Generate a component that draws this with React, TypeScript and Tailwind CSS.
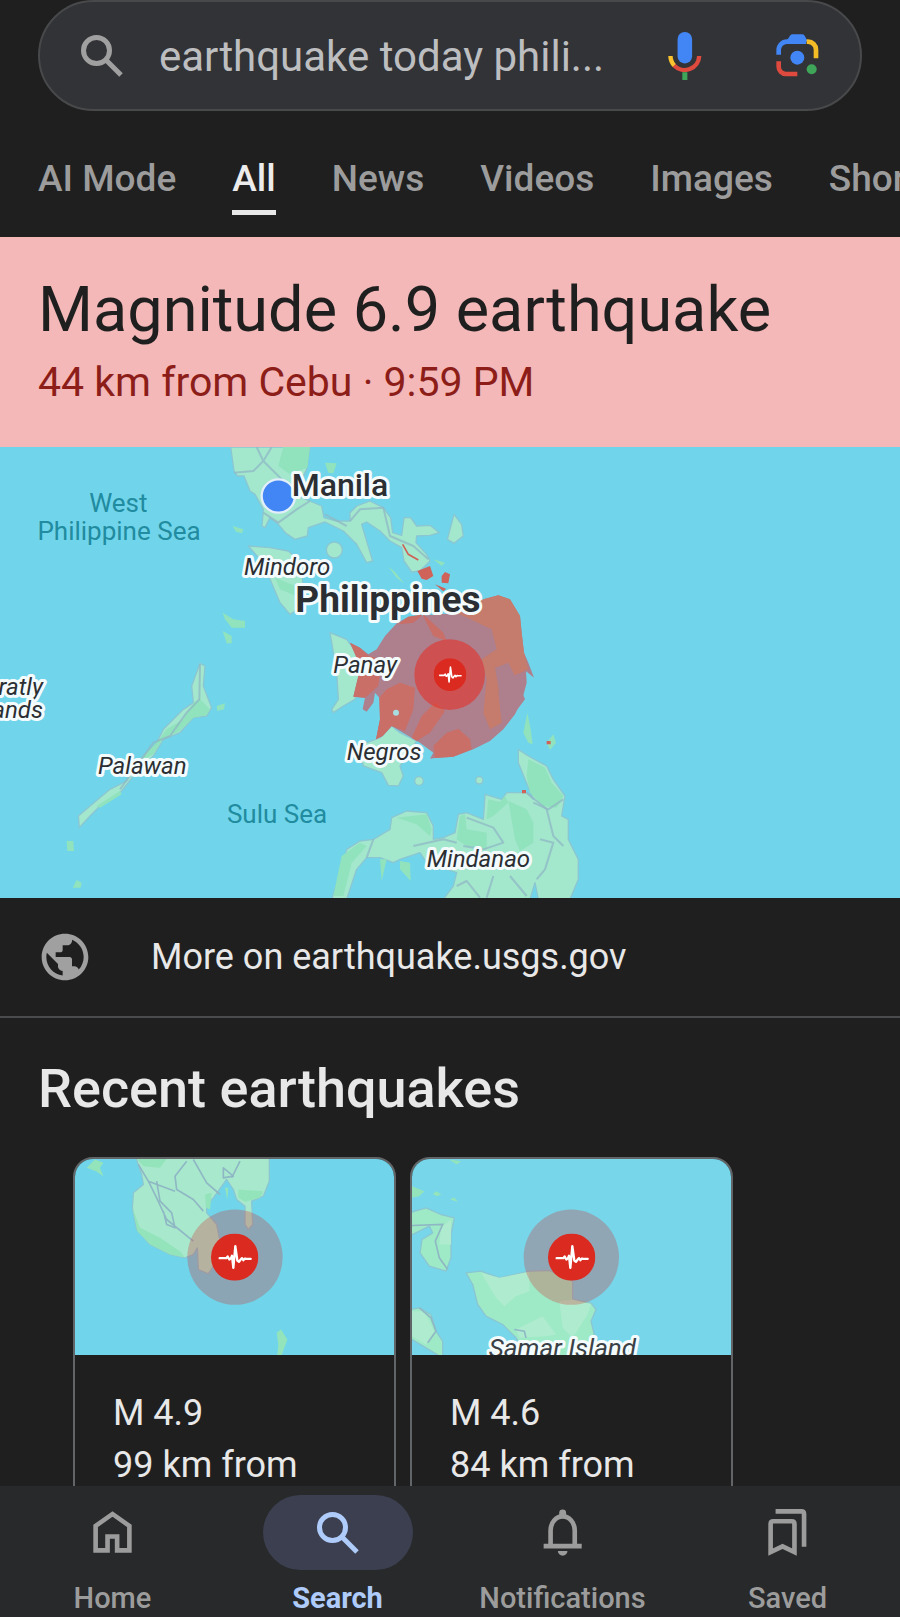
import type { ComponentType, SVGProps } from "react";
import { clsx } from "clsx";
import { MdPublic } from "react-icons/md";

type IconProps = SVGProps<SVGSVGElement>;

const SearchIcon = (props: IconProps) => (
  <svg viewBox="0 0 42 42" fill="none" stroke="currentColor" strokeWidth={5} aria-hidden {...props}>
    <circle cx="15.5" cy="15.5" r="13" />
    <path d="M24.5 24.5 40 40" />
  </svg>
);

const MicIcon = (props: IconProps) => (
  <svg viewBox="654 95 100 142" fill="none" aria-hidden {...props}>
    <rect x="682" y="95" width="43" height="93" rx="21" fill="#4285f4" />
    <path d="M661 166a42 42 0 0 0 12 29" stroke="#f9c22e" strokeWidth="13" />
    <path d="M672 194a43 43 0 0 0 74-28" stroke="#df4a3e" strokeWidth="13" />
    <path d="M703.500 214v23" stroke="#3fa558" strokeWidth="15" />
  </svg>
);

const LensIcon = (props: IconProps) => (
  <svg viewBox="977 101 129 129" fill="none" strokeWidth="14" aria-hidden {...props}>
    <path d="M985 163v-14a25 25 0 0 1 25-25h57" stroke="#4285f4" />
    <path d="M1010 120l9-14q3-4 8-4h28q5 0 8 4l10 18z" fill="#4285f4" />
    <path d="M1069 124h4a24 24 0 0 1 24 24v26" stroke="#f5bd25" />
    <path d="M985 183v16a22 22 0 0 0 22 22h34" stroke="#df4a3e" />
    <circle cx="1041" cy="172" r="21" fill="#4285f4" />
    <circle cx="1084" cy="207" r="15" fill="#3fa558" />
  </svg>
);

const HomeIcon = (props: IconProps) => (
  <svg viewBox="267 119 142 142" fill="none" stroke="currentColor" strokeWidth="14" aria-hidden {...props}>
    <path d="M287 244v-74l51-36 51 36v74h-37v-42h-29v42z" />
  </svg>
);

const BellIcon = (props: IconProps) => (
  <svg viewBox="266 119 142 142" fill="none" stroke="currentColor" strokeWidth="14" aria-hidden {...props}>
    <path d="M301 230v-46a36 42 0 0 1 73 0v46" />
    <path d="M280 231h115" />
    <path d="M327 143v-12a10.500 10.500 0 0 1 21 0v12zM323 246h29a14.500 14 0 0 1-29 0z" fill="currentColor" stroke="none" />
  </svg>
);

const SavedIcon = (props: IconProps) => (
  <svg viewBox="942 117 142 142" fill="none" stroke="currentColor" strokeWidth="14" aria-hidden {...props}>
    <path d="M962 247v-85q0-8 8-8h56q8 0 8 8v85l-36-17z" />
    <path d="M977 124h78q8 0 8 8v99" />
  </svg>
);

const PulseMarker = ({ x, y, size }: { x: number; y: number; size: number }) => (
  <svg x={x - size / 2} y={y - size / 2} width={size} height={size} viewBox="0 0 142 142">
    <circle cx="71" cy="71" r="71" fill="#db2a20" />
    <path
      d="M26 74h20l4-5 5 9 5-4 3-7 4 36 6-65 6 43 5 4 5-7 4-4 4 6 5-5 3 1h14"
      fill="none"
      stroke="#fff"
      strokeWidth="7"
      strokeLinejoin="round"
      strokeLinecap="round"
    />
  </svg>
);

const placeLabels = [
  { name: "Manila", x: 275, y: 149, className: "text-[96px] font-medium" },
  { name: "Mindoro", x: 132, y: 386, className: "text-[72px] italic" },
  { name: "Philippines", x: 286, y: 498, className: "text-[111px] font-bold" },
  { name: "Panay", x: 400, y: 681, className: "text-[72px] italic" },
  { name: "Negros", x: 440, y: 941, className: "text-[72px] italic" },
  { name: "Mindanao", x: 680, y: 1263, className: "text-[72px] italic" },
  { name: "Palawan", x: -306, y: 984, className: "text-[72px] italic" },
];

const seaLabels = [
  { name: "West", x: -245, y: 197 },
  { name: "Philippine Sea", x: -243, y: 282 },
  { name: "Sulu Sea", x: 231, y: 1131 },
];

const QuakeMap = () => (
  <svg
    viewBox="-600 3 2700 1353"
    preserveAspectRatio="xMidYMid slice"
    className="block h-[451px] w-full bg-[#70d5ea]"
    role="img"
    aria-label="Map of the Philippines"
  >
    <g fill="#a3e7cd" stroke="#8bc6d3" strokeWidth="4" strokeLinejoin="round">
      {/* Luzon and Bicol */}
      <path d="M92 3 330 3 320 70 300 110 290 150 330 165 365 180 372 215 410 225 450 225 450 200 470 180 510 165 550 185 572 215 578 260 605 268 612 215 632 215 650 240 690 238 718 260 690 268 650 270 648 290 680 325 690 345 660 375 635 378 612 345 605 305 570 285 540 255 500 228 485 235 500 285 518 345 500 350 470 295 430 255 375 228 325 245 322 270 285 280 258 262 235 235 210 215 195 245 186 240 190 190 165 145 150 135 132 90 112 90 102 75z" />
      <path d="M762 205 785 235 790 270 762 292 742 280z" />
      {/* Mindoro */}
      <path d="M145 300 210 305 265 315 300 345 310 420 295 490 270 505 240 470 210 400 180 340z" />
      <circle cx="403" cy="312" r="24" />
      {/* Panay, west coast */}
      <path d="M390 560 440 580 470 620 530 640 490 700 465 760 430 780 400 800 395 790 415 760 410 680z" />
      {/* Negros, south */}
      <path d="M575 840 600 860 650 885 620 930 600 960 610 990 595 1020 565 1018 545 980 490 960 475 900 540 875z" />
      {/* Palawan */}
      <path d="M0 652 15 660 10 720 35 785 20 810-20 815-60 860-110 880-140 930-200 990-235 1035-300 1080-330 1110-362 1145-365 1110-330 1080-270 1030-220 1005-190 950-130 890-110 850-80 820-50 790-20 770-25 720z" />
      {/* Mindanao */}
      <path d="M395 1360 425 1270 440 1210 480 1185 520 1180 570 1150 575 1115 620 1095 680 1100 700 1140 700 1180 730 1175 765 1160 775 1105 800 1100 850 1120 855 1045 905 1060 920 1040 980 1040 1000 1060 975 1000 955 950 955 910 985 930 1040 960 1060 1000 1095 1050 1085 1110 1105 1120 1105 1180 1135 1240 1135 1300 1110 1360 1015 1360 1005 1310 990 1360 730 1360 760 1320 770 1280 680 1250 660 1220 600 1240 580 1250 540 1235 500 1235 470 1270 440 1360z" />
      <circle cx="657" cy="1005" r="13" />
      <circle cx="838" cy="1003" r="11" />
    </g>
    <g fill="#90e3bc">
      <path d="M250 3 330 3 322 65 270 85 235 60z" />
      <path d="M375 50 410 52 400 82 385 80z" />
      <path d="M98 240 130 250 126 262 108 257z" />
      <path d="M225 395 300 425 290 450 240 430z" />
      <path d="M68 500 100 520 135 525 135 545 95 545 75 520z" />
      <path d="M68 555 95 570 95 592 80 592z" />
      <path d="M565 362 585 378 612 412 590 395z" />
      <path d="M700 340 735 350 725 360z" />
      <path d="M50 780 75 772 72 790 52 795z" />
      <path d="M-190 950-130 890-100 850-50 820-20 770 0 760 30 790 20 808-20 815-60 855-110 878-140 925z" />
      <path d="M-310 1080-240 1035-235 1045-300 1085z" />
      <path d="M-400 1185-380 1185-378 1215-398 1215zM-382 1325-370 1302-355 1310-358 1325z" />
      <path d="M425 1230 480 1190 500 1200 455 1250 430 1350 400 1350z" />
      <path d="M590 1115 680 1105 695 1150 690 1170 650 1135z" />
      <path d="M780 1110 795 1105 800 1150 860 1160 860 1210 800 1200 770 1180z" />
      <path d="M925 1065 980 1090 1000 1130 1000 1190 960 1215 945 1180z" />
      <path d="M985 940 1035 965 1055 1010 1090 1050 1070 1085 1030 1080 990 1040 980 990z" />
      <path d="M970 860 982 800 992 850 998 895 985 890z" />
      <path d="M1040 890 1060 865 1068 890 1050 912z" />
      <path d="M540 1240 560 1240 545 1305zM600 1245 630 1250 632 1305 600 1270z" />
      <path d="M865 1060 900 1068 915 1050 925 1070 880 1110 860 1120z" />
    </g>
    <g fill="none" stroke="#8fb8c4" strokeWidth="6" strokeOpacity={0.75} strokeLinejoin="round">
      <path d="M170 3 190 45 240 95 300 150M102 80 160 75 190 45 215 3M190 200 235 230 290 190 330 165" />
      <path d="M450 225 480 190 550 185 570 270 640 300 685 340M375 205 440 240" />
      <path d="M0 655-2 760-40 800-90 870-140 890-240 1030" />
      <path d="M520 1180 500 1235M640 1200 730 1180 770 1190M800 1115 880 1145 910 1190 850 1210 790 1200" />
      <path d="M980 1040 1040 1090 1060 1170 1090 1200M1020 1180 1060 1190 1035 1270 1010 1300M930 1290 980 1350M860 1355 880 1290" />
      <path d="M770 1320 800 1305 840 1355M1000 1070 1045 1090 1090 1060" />
    </g>

    {/* shaken area */}
    <path
      fill="#ae7f8c"
      d="M450 590 480 605 505 625 530 610 555 570 590 532 625 512 840 495 850 460 895 448 930 460 960 510 965 560 972 620 985 650 1002 695 978 676 980 710 968 755 945 805 910 850 870 885 820 910 760 932 705 936 690 938 700 920 660 890 600 855 575 840 548 870 528 880 540 820 538 755 525 740 520 770 500 797 488 790 495 755 460 752 475 690 470 635z"
    />
    <g fill="#c96f68">
      <path d="M450 590 480 605 505 630 545 640 535 720 495 755 460 752 475 690 470 635z" />
      <path d="M560 730 600 710 645 725 640 790 615 855 575 840 548 870 528 880 540 820 538 755z" />
      <path d="M705 770 735 795 690 860 650 885 635 875 665 810z" />
      <path d="M740 860 775 848 810 880 815 910 760 932 705 936 700 900z" />
      <path d="M595 535 625 512 670 505 640 530z" />
      <path d="M665 500 730 560 740 585 700 570z" />
    </g>
    <path
      fill="#c57c6c"
      d="M770 500 850 460 895 448 930 460 960 510 965 560 972 620 985 670 940 690 905 660 895 740 905 830 870 850 850 800 860 700 845 640 890 610 875 550z"
    />
    <path fill="#ae7f8c" d="M885 665 925 650 950 700 975 760 930 820 905 780z" />
    <circle cx="588" cy="800" r="9" fill="#a8dce0" />
    <path fill="#cf6259" d="M652 375 690 360 700 390 680 402 665 398zM725 390 735 378 750 385 745 412 725 410zM705 415 738 428 730 436zM1040 885h12v10h-12zM966 1032h12v10h-12z" />
    <path fill="none" stroke="#cf6259" strokeWidth="5" d="M608 295 625 325 655 342" />
    <circle cx="749" cy="686" r="106" fill="#e4342c" fillOpacity={0.62} />
    <PulseMarker x={750} y={686} size={98} />
    <circle cx="235" cy="150" r="50" fill="#4285f4" stroke="#e3eefb" strokeWidth="7" />

    <g className="fill-[#2b2f33] font-[Roboto,sans-serif]" stroke="#f4fbfd" strokeWidth="18" strokeLinejoin="round" paintOrder="stroke">
      {placeLabels.map(({ name, x, y, className }) => (
        <text key={name} x={x} y={y} className={className}>
          {name}
        </text>
      ))}
      <text x="-471" y="746" textAnchor="end" className="text-[72px] italic">
        ratly
      </text>
      <text x="-471" y="815" textAnchor="end" className="text-[72px] italic">
        ands
      </text>
    </g>
    <g className="fill-[#218ba0] font-[Roboto,sans-serif] text-[78px]" textAnchor="middle">
      {seaLabels.map(({ name, x, y }) => (
        <text key={name} x={x} y={y}>
          {name}
        </text>
      ))}
    </g>
  </svg>
);

const SouthCoastMap = () => (
  <svg viewBox="45 43 957 589" preserveAspectRatio="xMidYMid slice" className="block h-[196px] w-full bg-[#70d5ea]" aria-hidden>
    <g fill="#a8e8cd" stroke="#8bc6d3" strokeWidth="4" strokeLinejoin="round">
      <path d="M228 40 245 90 250 120 220 145 217 190 230 255 270 300 330 330 375 340 400 330 412 310 415 375 445 388 470 350 480 290 470 240 455 222 440 205 440 185 460 160 500 105 520 135 530 165 555 185 555 240 565 255 578 240 575 170 610 155 628 110 628 40z" />
    </g>
    <g fill="#93e4bb">
      <path d="M80 70 105 45 130 55 120 70 130 95 108 80z" />
      <path d="M230 43 320 43 300 70 250 65z" />
      <path d="M217 190 240 250 300 280 360 320 375 340 330 330 270 300 232 260z" />
      <path d="M435 150 455 145 450 195 438 190z" />
      <path d="M535 135 610 140 600 160 555 172 535 160zM495 130 505 130 502 165z" />
      <path d="M650 565 663 555 682 585 665 632 652 632 655 600z" />
    </g>
    <g fill="none" stroke="#8fb8c4" strokeWidth="5" strokeLinejoin="round">
      <path d="M380 50 345 95 350 135 400 165 430 200M400 45 440 115 480 150" />
      <path d="M235 60 265 110 345 140M265 110 290 160 320 225 400 290M290 110 300 170 335 205 345 250 320 240 310 200" />
      <path d="M490 70 520 95 490 100zM540 50 515 100" />
    </g>
    <circle cx="525" cy="338" r="143" fill="#d92b27" fillOpacity={0.28} />
    <PulseMarker x={524} y={338} size={142} />
  </svg>
);

const SamarMap = () => (
  <svg viewBox="38 43 957 589" preserveAspectRatio="xMidYMid slice" className="block h-[196px] w-full bg-[#77d6ea]" aria-hidden>
    <g fill="#9ee9c6" stroke="#8bc6d3" strokeWidth="4" strokeLinejoin="round">
      <path d="M200 385 245 380 300 400 390 380 450 378 520 410 520 465 575 475 590 495 575 530 585 570 560 640 390 640 350 580 310 540 260 515 235 480 220 420z" />
      <path d="M30 205 80 190 125 210 165 220 155 270 155 340 140 380 90 365 62 325 68 285 100 265 90 245 30 275z" />
      <path d="M30 495 60 490 95 510 110 560 130 590 130 640 80 610 30 580z" />
    </g>
    <g fill="#afeccf">
      <path d="M245 385 300 400 390 382 390 440 350 455 315 485 290 460z" />
      <path d="M520 465 575 480 565 510 520 580 490 550 480 470zM350 555 430 515 470 570 440 575 360 580z" />
      <path d="M125 250 155 225 155 300 120 300zM38 500 75 500 105 560 80 600 38 575z" />
    </g>
    <g fill="#93e4bb">
      <path d="M38 125 75 140 60 155 38 160zM100 148 112 140 126 150 112 155zM152 165 165 158 175 172zM150 45 185 50 172 60z" />
    </g>
    <g fill="none" stroke="#8fb8c4" strokeWidth="5">
      <path d="M38 243 130 240 108 290 120 340 145 375M60 490 95 520 110 560 85 595M345 555 375 560 380 580" />
    </g>
    <circle cx="516" cy="338" r="143" fill="#d92b27" fillOpacity={0.28} />
    <PulseMarker x={517} y={338} size={142} />
    <text
      x="268"
      y="638"
      className="fill-[#3a4146] font-[Roboto,sans-serif] text-[78px] italic"
      stroke="#f4fbfd"
      strokeWidth="18"
      strokeLinejoin="round"
      paintOrder="stroke"
    >
      Samar Island
    </text>
  </svg>
);

const tabs = ["AI Mode", "All", "News", "Videos", "Images", "Shorts"];

const quakes: { magnitude: string; distance: string; Map: ComponentType }[] = [
  { magnitude: "M 4.9", distance: "99 km from", Map: SouthCoastMap },
  { magnitude: "M 4.6", distance: "84 km from", Map: SamarMap },
];

const navItems: { label: string; Icon: ComponentType<IconProps> }[] = [
  { label: "Home", Icon: HomeIcon },
  { label: "Search", Icon: SearchIcon },
  { label: "Notifications", Icon: BellIcon },
  { label: "Saved", Icon: SavedIcon },
];

const SearchBar = () => (
  <form className="mx-[38px] flex h-[111px] items-center rounded-full border-2 border-[#48494b] bg-[#323336] px-[41px]">
    <SearchIcon className="size-[42px] shrink-0 text-[#a0a0a0]" />
    <input
      type="text"
      aria-label="Search"
      defaultValue="earthquake today phili..."
      className="ml-9 h-full min-w-0 flex-1 bg-transparent pt-0.5 text-[42px] text-[#bdbec0] outline-none"
    />
    <button type="button" aria-label="Search by voice" className="shrink-0">
      <MicIcon className="h-12 w-[34px]" />
    </button>
    <button type="button" aria-label="Search by image" className="ml-[74px] shrink-0">
      <LensIcon className="size-[43px]" />
    </button>
  </form>
);

const Tabs = () => (
  <nav className="flex h-[126px] gap-14 overflow-hidden px-[38px] pt-[42px]">
    {tabs.map((tab) => (
      <a
        key={tab}
        href="#"
        className={clsx(
          "h-[62px] shrink-0 border-b-[5px] text-[37px] leading-[52px] font-medium whitespace-nowrap",
          tab === "All" ? "border-[#e8e8e8] text-[#ececec]" : "border-transparent text-[#9c9c9c]",
        )}
      >
        {tab}
      </a>
    ))}
  </nav>
);

export default function App() {
  return (
    <div className="flex h-screen flex-col bg-[#1f1f1f] font-[Roboto,sans-serif] text-[#e8e8e8]">
      <main className="min-h-0 flex-1 overflow-hidden">
        <SearchBar />
        <Tabs />

        <section>
          <header className="bg-[#f4b8b8] px-[38px] pt-[35px] pb-9">
            <h1 className="text-[63px] leading-[76px] text-[#1f1f1f]">Magnitude 6.9 earthquake</h1>
            <p className="pt-1.5 text-[41px] leading-[57px] text-[#8c1d18]">44 km from Cebu · 9:59 PM</p>
          </header>
          <QuakeMap />
          <a href="#" className="flex h-[120px] items-center border-b-2 border-[#4a4b4d] pl-[37px]">
            <MdPublic className="size-14 text-[#a0a0a0]" />
            <span className="ml-[58px] text-[36px]">More on earthquake.usgs.gov</span>
          </a>
        </section>

        <section>
          <h2 className="px-[38px] pt-[39px] text-[54px] leading-[64px] font-medium">Recent earthquakes</h2>
          <div className="mt-9 flex gap-3.5 px-[73px]">
            {quakes.map(({ magnitude, distance, Map }) => (
              <article
                key={magnitude}
                className="w-[323px] shrink-0 overflow-hidden rounded-[20px] border-2 border-[#626567]"
              >
                <Map />
                <div className="px-[38px] pt-8 pb-10 text-[36px] leading-[52px]">
                  <h3>{magnitude}</h3>
                  <p>{distance}</p>
                </div>
              </article>
            ))}
          </div>
        </section>
      </main>

      <nav className="grid h-[131px] shrink-0 grid-cols-4 bg-[#28292a] text-[#9c9c9c]">
        {navItems.map(({ label, Icon }) => {
          const active = label === "Search";
          return (
            <a
              key={label}
              href="#"
              className={clsx(
                "flex flex-col items-center pt-[9px] text-[29px]",
                active ? "font-bold text-[#aecbfa]" : "font-medium",
              )}
            >
              <span
                className={clsx(
                  "flex h-[75px] w-[150px] items-center justify-center rounded-full",
                  active && "bg-[#3b3f4f]",
                )}
              >
                <Icon className={active ? "size-[42px]" : "size-[47px]"} />
              </span>
              <span className="mt-2.5 leading-9">{label}</span>
            </a>
          );
        })}
      </nav>
    </div>
  );
}
